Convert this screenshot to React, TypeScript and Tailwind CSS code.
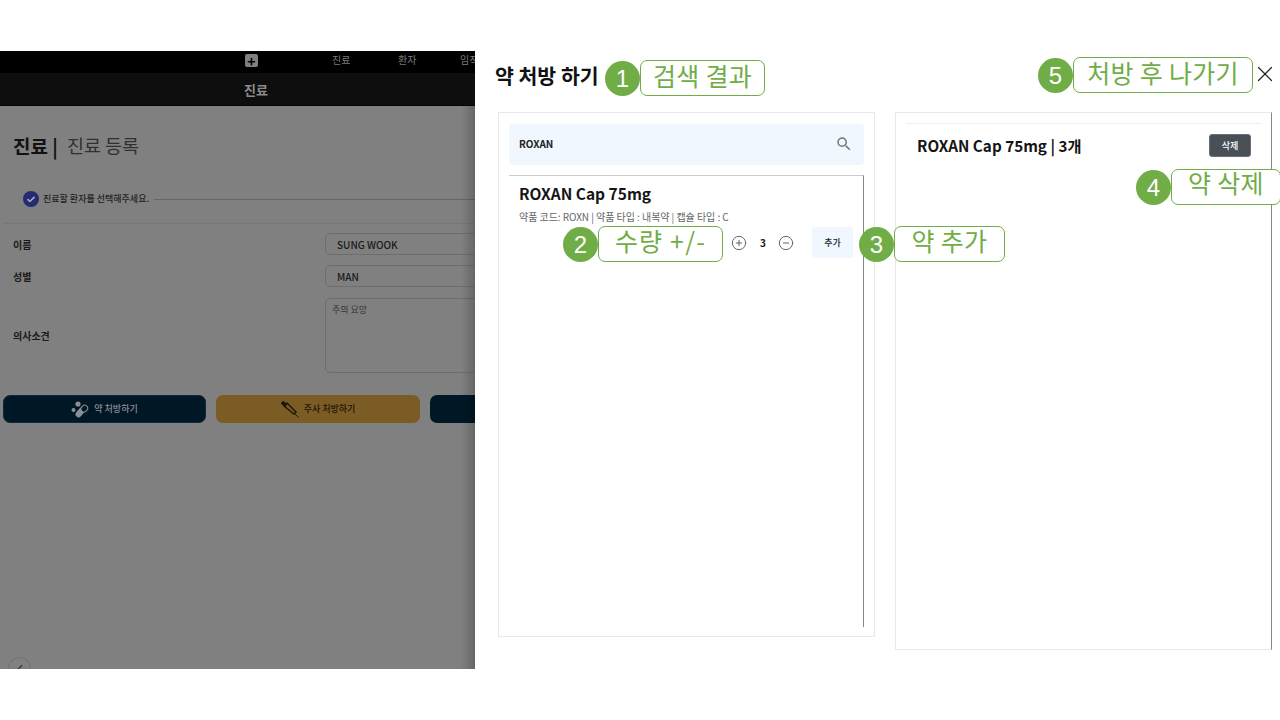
import { X, CirclePlus, CircleMinus, ChevronLeft } from "lucide-react";
import { MdSearch } from "react-icons/md";

const FONT = "font-['Noto_Sans_CJK_KR','Noto_Sans',sans-serif]";

function Callout({ n, label, className, labelClass = "-mt-[6px]" }: { n: number; label: string; className: string; labelClass?: string }) {
  return (
    <div className={`absolute flex items-center h-[36px] ${className}`}>
      <div className="w-[35px] h-[35px] flex-shrink-0 rounded-full bg-[#70ad47] flex items-center justify-center text-white text-[24px] font-['Liberation_Sans',sans-serif]">
        <span className="mt-[2px]">{n}</span>
      </div>
      <div className="flex-1 h-[36px] rounded-[7px] border border-[#70ad47] bg-white flex items-center justify-center text-[#70ad47] text-[25px] tracking-[0.3px] leading-none">
        <span className={`whitespace-nowrap ${labelClass}`}>{label}</span>
      </div>
    </div>
  );
}

function Field({ label, value }: { label: string; value: string }) {
  return (
    <div className="flex items-center h-[32px]">
      <div className="w-[325px] pl-[13px] text-[10px] font-bold text-[#1a1a1a]">{label}</div>
      <div className="flex-1 h-[22px] -mr-[30px] rounded-[5px] border border-[#6e6e6e] pl-[11px] flex items-center text-[10px] font-medium text-[#1a1a1a]">
        {value}
      </div>
    </div>
  );
}

function PillsIcon() {
  return (
    <svg className="w-[18px] h-[17px]" viewBox="0 0 18 17" fill="none">
      <circle cx="2.5" cy="9" r="2" fill="#8a8f94" />
      <circle cx="7" cy="3" r="2.6" fill="#8a8f94" />
      <rect x="6.5" y="6" width="6" height="11" rx="3" transform="rotate(40 9.5 11)" fill="#8a8f94" />
      <rect x="10" y="4" width="6" height="7" rx="3" transform="rotate(40 13 8)" fill="#001826" stroke="#8a8f94" />
    </svg>
  );
}

function SyringeIcon() {
  return (
    <svg className="w-[18px] h-[18px]" viewBox="0 0 18 18" fill="none" stroke="#1a1408">
      <path d="M1 2l4 4" strokeWidth="3.5" />
      <path d="M3 6l3-3 9 9-2 2z" strokeWidth="1.4" />
      <path d="M14 14l3.5 3.5" strokeWidth="1" />
    </svg>
  );
}

export default function App() {
  return (
    <div className={`relative w-[1280px] h-[720px] overflow-hidden bg-white ${FONT}`}>
      <div className="h-[51px]" />
      <div className="flex h-[618px]">
        {/* dimmed page behind the drawer */}
        <div className="relative w-[475px] flex-shrink-0 overflow-hidden bg-[#808080]">
          <div className="relative h-[22px] bg-black text-[10px] text-[#7a7a7a]">
            <div className="absolute left-[245px] top-[3px] w-[13px] h-[13px] rounded-[2px] bg-[#808080] flex items-center justify-center">
              <span className="text-black text-[14px] font-bold leading-none">+</span>
            </div>
            <span className="absolute left-[332px] top-[1px]">진료</span>
            <span className="absolute left-[398px] top-[1px]">환자</span>
            <span className="absolute left-[460px] top-[1px] whitespace-nowrap">임직</span>
          </div>
          <div className="h-[33px] bg-[#0e0e0e] border-b border-[#050505] pl-[244px] flex items-center text-[13px] font-bold text-[#8c8c8c]">
            <span className="mt-[1px]">진료</span>
          </div>

          <div className="flex items-center h-[24px] mt-[27px] pl-[13px] leading-none">
            <span className="text-[19px] font-bold text-[#111111]">진료 |</span>
            <span className="ml-[9px] text-[18.5px] text-[#303030]">진료 등록</span>
          </div>

          <div className="flex items-center mt-[34px] h-[16px] pl-[23px]">
            <div className="w-[16px] h-[16px] rounded-full bg-[#232c6e] flex items-center justify-center">
              <svg className="w-[10px] h-[10px]" viewBox="0 0 10 10" fill="none" stroke="#a9adc9" strokeWidth="1.6">
                <path d="M1.5 5.2l2.4 2.3 4.6-4.6" />
              </svg>
            </div>
            <span className="ml-[4px] text-[9px] font-medium text-[#1f1f1f] whitespace-nowrap">진료할 환자를 선택해주세요.</span>
            <div className="flex-1 ml-[5px] h-px bg-[#666666]" />
          </div>
          <div className="mt-[16px] ml-[3px] h-px bg-[#777777]" />

          <div className="mt-[4px]">
            <Field label="이름" value="SUNG WOOK" />
            <Field label="성별" value="MAN" />
          </div>

          <div className="flex items-center mt-[6px] h-[75px]">
            <div className="w-[325px] pl-[13px] text-[10px] font-bold text-[#1a1a1a]">의사소견</div>
            <div className="flex-1 h-[75px] -mr-[30px] rounded-[5px] border border-[#6e6e6e] pl-[6px] pt-[4px] text-[9px] text-[#333333]">
              주의 요망
            </div>
          </div>

          <div className="flex gap-[10px] mt-[22px] pl-[3px] -mr-[100px]">
            <div className="w-[203px] h-[28px] flex-shrink-0 rounded-[7px] bg-[#001826] border border-[#0d2a3a] flex items-center justify-center gap-[5px] text-[9px] font-medium text-[#8a8f94]">
              <PillsIcon />
              약 처방하기
            </div>
            <div className="w-[204px] h-[28px] flex-shrink-0 rounded-[7px] bg-[#7a5c24] flex items-center justify-center gap-[5px] text-[9px] font-medium text-[#1a1408]">
              <SyringeIcon />
              주사 처방하기
            </div>
            <div className="w-[203px] h-[28px] flex-shrink-0 rounded-[7px] bg-[#001826]" />
          </div>

          <div className="absolute left-[8px] top-[606px] w-[23px] h-[23px] rounded-full border border-[#707070] flex items-center justify-center">
            <ChevronLeft className="w-[14px] h-[14px] text-[#333333]" strokeWidth={2} />
          </div>
          <div className="absolute right-0 top-[55px] bottom-0 w-[14px] bg-gradient-to-r from-transparent to-black/20" />
        </div>

        {/* prescription drawer */}
        <div className="flex-1 bg-white flex flex-col">
          <div className="flex items-center justify-between h-[61px] pl-[20px] pr-[2px]">
            <h1 className="text-[20.5px] font-bold text-[#111111] leading-none -mt-[12px]">약 처방 하기</h1>
            <X className="w-[26px] h-[26px] text-[#222222] -mt-[15px]" strokeWidth={1.1} />
          </div>
          <div className="flex items-start gap-[20px] pl-[23px]">
            <div className="w-[377px] h-[525px] border border-[#e8e8e8] p-[10px] pt-[11px] flex flex-col">
              <div className="h-[41px] rounded-[4px] bg-[#f0f7ff] flex items-center justify-between pl-[10px] pr-[11px] flex-shrink-0">
                <span className="text-[10px] font-bold text-[#222222] -mt-[2px]">ROXAN</span>
                <MdSearch className="w-[18px] h-[18px] text-[#777777] -mt-[2px]" />
              </div>
              <div className="flex-1 mt-[10px] mb-[-1px] border-t border-t-[#cccccc] border-r border-r-[#888888] pl-[10px] pr-[10px]">
                <div className="mt-[5px] text-[15.5px] font-bold leading-[24px] text-[#151515]">ROXAN Cap 75mg</div>
                <div className="mt-[5px] text-[10px] tracking-[-0.05px] leading-[14px] text-[#666666]">
                  약품 코드: ROXN | 약품 타입 : 내복약 | 캡슐 타입 : C
                </div>
                <div className="flex items-center justify-end mt-[3px] h-[31px]">
                  <CirclePlus className="w-[16px] h-[16px] text-[#666666]" strokeWidth={1.5} />
                  <span className="mx-[13px] w-[5px] text-[10px] font-bold text-[#222222]">3</span>
                  <CircleMinus className="w-[16px] h-[16px] text-[#666666]" strokeWidth={1.5} />
                  <div className="ml-[18px] w-[41px] h-[31px] rounded-[3px] bg-[#f0f7ff] flex items-center justify-center text-[9px] font-medium text-[#222222]">
                    추가
                  </div>
                </div>
              </div>
            </div>

            <div className="w-[377px] h-[538px] border border-[#e8e8e8] border-r-[#888888] p-[10px] pt-[10px]">
              <div className="border-t border-[#eeeeee] flex items-center justify-between pl-[11px] pr-[10px] pt-[10px]">
                <span className="-mt-[2px] text-[15.25px] font-bold leading-[22px] text-[#151515]">ROXAN Cap 75mg | 3개</span>
                <div className="w-[42px] h-[23px] rounded-[3px] bg-[#494f57] border border-[#6b7078] flex items-center justify-center text-[9px] font-medium text-white">
                  삭제
                </div>
              </div>
            </div>
          </div>
        </div>
      </div>

      <Callout n={1} label="검색 결과" className="left-[605px] top-[60px] w-[160px]" />
      <Callout n={2} label="수량 +/-" className="left-[563px] top-[226px] w-[160px]" labelClass="-mt-[7px] tracking-[1.2px]" />
      <Callout n={3} label="약 추가" className="left-[859px] top-[226px] w-[146px]" labelClass="-mt-[7px]" />
      <Callout n={4} label="약 삭제" className="left-[1136px] top-[169px] w-[145px]" labelClass="-mt-[9px]" />
      <Callout n={5} label="처방 후 나가기" className="left-[1038px] top-[57px] w-[215px]" />
    </div>
  );
}
